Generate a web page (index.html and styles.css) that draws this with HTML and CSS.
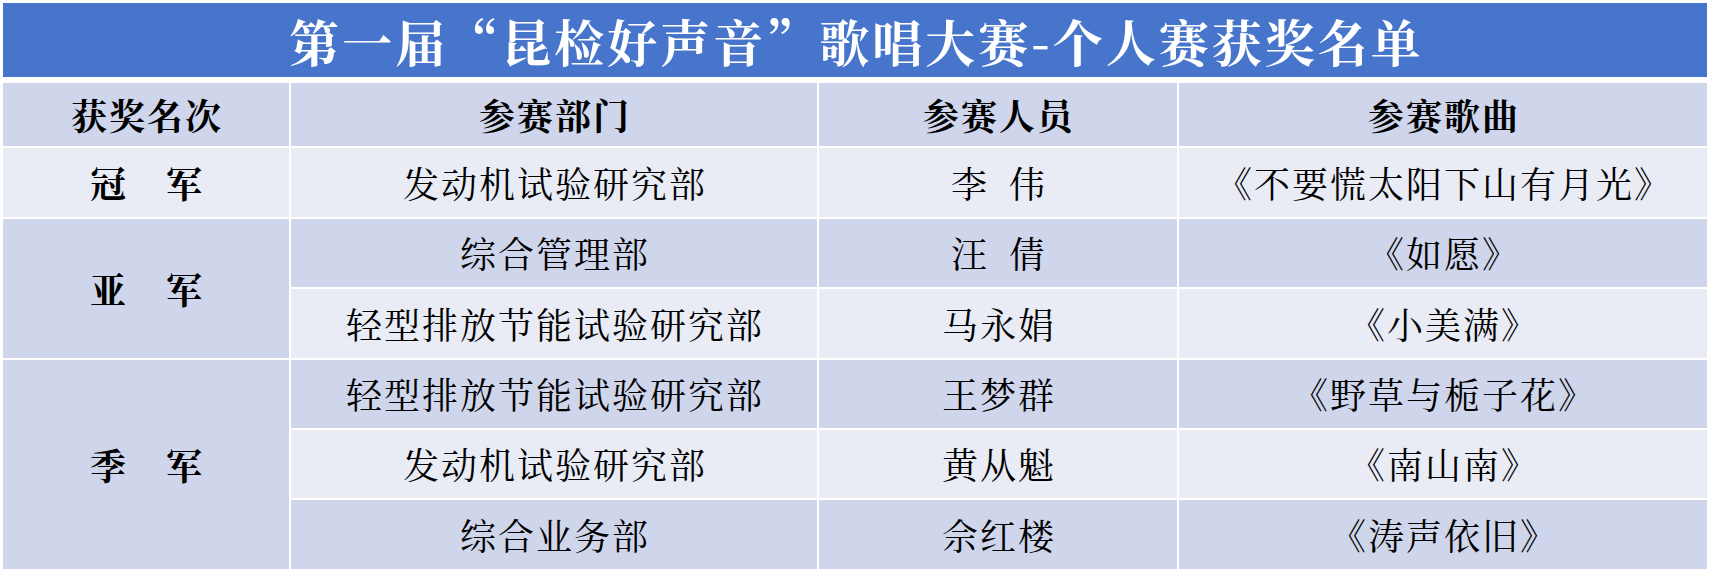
FILE: index.html
```html
<!DOCTYPE html>
<html lang="zh-CN">
<head>
<meta charset="utf-8">
<title>获奖名单</title>
<link rel="stylesheet" href="styles.css">
</head>
<body>
<div class="page">
  <div class="title">第一届“昆检好声音”歌唱大赛-个人赛获奖名单</div>
  <div class="grid">
    <div class="cell head">获奖名次</div>
    <div class="cell head">参赛部门</div>
    <div class="cell head">参赛人员</div>
    <div class="cell head">参赛歌曲</div>

    <div class="cell light rank">冠　军</div>
    <div class="cell light">发动机试验研究部</div>
    <div class="cell light">李&ensp;伟</div>
    <div class="cell light">《不要慌太阳下山有月光》</div>

    <div class="cell dark rank span2">亚　军</div>
    <div class="cell dark">综合管理部</div>
    <div class="cell dark">汪&ensp;倩</div>
    <div class="cell dark">《如愿》</div>

    <div class="cell light">轻型排放节能试验研究部</div>
    <div class="cell light">马永娟</div>
    <div class="cell light">《小美满》</div>

    <div class="cell dark rank span3">季　军</div>
    <div class="cell dark">轻型排放节能试验研究部</div>
    <div class="cell dark">王梦群</div>
    <div class="cell dark">《野草与栀子花》</div>

    <div class="cell light">发动机试验研究部</div>
    <div class="cell light">黄从魁</div>
    <div class="cell light">《南山南》</div>

    <div class="cell dark">综合业务部</div>
    <div class="cell dark">佘红楼</div>
    <div class="cell dark">《涛声依旧》</div>
  </div>
</div>
</body>
</html>
```

FILE: styles.css
```css
html, body {
  margin: 0;
  padding: 0;
  background: #ffffff;
}
.page {
  padding: 3px 3px 0 3px;
  width: 1704px;
  font-family: "Noto Serif CJK SC", "Noto Sans CJK SC", serif;
}
.title {
  height: 74px;
  background: #4775cb;
  color: #ffffff;
  font-size: 50px;
  font-weight: 700;
  letter-spacing: 3px;
  padding-left: 3px;
  display: flex;
  align-items: center;
  justify-content: center;
  margin-bottom: 6px;
  line-height: 1;
}
.grid {
  display: grid;
  grid-template-columns: 286px 526px 358px 528px;
  grid-template-rows: 63px 69px 68px 69px 68px 68px 69px;
  gap: 2px;
}
.cell {
  display: flex;
  align-items: center;
  justify-content: center;
  font-size: 36px;
  letter-spacing: 2px;
  padding-left: 2px;
  color: #000000;
  line-height: 1;
  white-space: pre;
}
.head {
  background: #cfd5ea;
  font-weight: 700;
}
.dark {
  background: #cfd5ea;
}
.light {
  background: #e9ebf5;
}
.rank {
  font-weight: 700;
}
.span2 {
  grid-row: span 2;
}
.span3 {
  grid-row: span 3;
}
```
